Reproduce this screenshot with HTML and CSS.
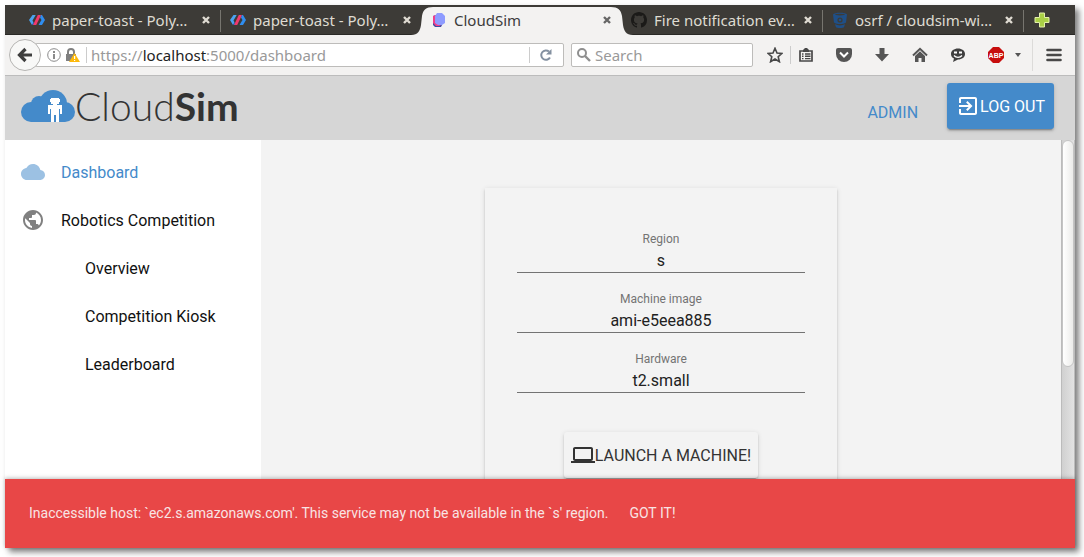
FILE: index.html
```html
<!DOCTYPE html>
<html lang="en">
<head>
<meta charset="utf-8">
<meta name="viewport" content="width=device-width, initial-scale=1">
<title>CloudSim</title>
<link rel="stylesheet" href="styles.css">
</head>
<body>
<svg class="defs" aria-hidden="true">
  <symbol id="polymer" viewBox="0 0 16 16">
    <path d="M3.500 3h3.200L3.500 8.500 4.500 10.500 3 13 0 8z" fill="#4aa3f0"/>
    <path d="M3 13l1.700-2.700L6 13z" fill="#1f5fc4"/>
    <path d="M8.800 3H12L7.200 13H4z" fill="#f2386b"/>
    <path d="M12 3h1l3 5-3 5H9.500l3-5-1.500-2.500z" fill="#2f8def"/>
  </symbol>
  <symbol id="close" viewBox="0 0 10 10">
    <path d="M2 2l6 6M8 2L2 8" stroke="currentColor" stroke-width="2.400"/>
  </symbol>
</svg>
<div class="window">
  <nav class="tabs" aria-label="Browser tabs">
    <div class="tab">
      <svg class="fav"><use href="#polymer"/></svg>
      <span class="tab-title">paper-toast - Poly…</span>
      <button class="close" aria-label="Close tab"><svg class="x"><use href="#close"/></svg></button>
    </div>
    <div class="tab plain">
      <svg class="fav"><use href="#polymer"/></svg>
      <span class="tab-title">paper-toast - Poly…</span>
      <button class="close" aria-label="Close tab"><svg class="x"><use href="#close"/></svg></button>
    </div>
    <div class="tab active">
      <svg class="curve left" viewBox="0 0 22 29"><path d="M0 29C7 29 9 25 10 19L11 10C12 4 15 1 22 1V29Z"/></svg>
      <svg class="curve right" viewBox="0 0 22 29"><path d="M22 29C15 29 13 25 12 19L11 10C10 4 7 1 0 1V29Z"/></svg>
      <svg class="fav" viewBox="0 0 16 16">
        <path d="M2 4l3-1v10h6l-1 2H4l-2-2z" fill="#3f4aa0"/>
        <path d="M2 4l3-1v8l5 3H5l-3-3z" fill="#f03e8a"/>
        <path d="M6 1h5l3 3v7l-3 2H7l-3-2V4z" fill="#8e9bff"/>
      </svg>
      <span class="tab-title">CloudSim</span>
      <button class="close" aria-label="Close tab"><svg class="x"><use href="#close"/></svg></button>
    </div>
    <div class="tab">
      <svg class="fav" viewBox="0 0 16 16"><path fill="#1b1a18" d="M8 0C3.580 0 0 3.580 0 8c0 3.540 2.290 6.530 5.470 7.590.4.070.55-.17.55-.38 0-.19-.01-.82-.01-1.490-2.010.37-2.530-.49-2.690-.94-.09-.23-.48-.94-.82-1.130-.28-.15-.68-.52-.01-.53.63-.01 1.080.58 1.230.82.72 1.210 1.870.87 2.330.66.07-.52.28-.87.51-1.070-1.780-.2-3.640-.89-3.640-3.950 0-.87.31-1.590.82-2.150-.08-.2-.36-1.020.08-2.120 0 0 .67-.21 2.200.82.64-.18 1.320-.27 2-.27s1.360.09 2 .27c1.530-1.040 2.200-.82 2.200-.82.44 1.100.16 1.920.08 2.120.51.56.82 1.270.82 2.150 0 3.070-1.870 3.750-3.650 3.950.29.25.54.73.54 1.480 0 1.070-.01 1.930-.01 2.200 0 .21.15.46.55.38A8.010 8.010 0 0 0 16 8c0-4.420-3.580-8-8-8z"/></svg>
      <span class="tab-title">Fire notification ev…</span>
      <button class="close" aria-label="Close tab"><svg class="x"><use href="#close"/></svg></button>
    </div>
    <div class="tab">
      <svg class="fav" viewBox="0 0 16 16">
        <path d="M1 2.500C2 0 14 0 15 2.500L14 10.500C11 12.500 5 12.500 2 10.500Z" fill="#1f4f87"/>
        <path d="M3 12.300c3 1.500 7 1.500 10 0l-1 2.900c-2 1.200-6 1.200-8 0z" fill="#1f4f87"/>
        <ellipse cx="8" cy="2.600" rx="5" ry="0.800" fill="#3d3b37"/>
        <circle cx="8" cy="8" r="2.600" fill="#3d3b37"/><circle cx="8" cy="8" r="1.300" fill="#1f4f87"/>
      </svg>
      <span class="tab-title">osrf / cloudsim-wi…</span>
      <button class="close" aria-label="Close tab"><svg class="x"><use href="#close"/></svg></button>
    </div>
    <button class="new-tab" aria-label="New tab">
      <svg class="fav" viewBox="0 0 16 16"><path d="M5.500 1h5v4.500H15v5h-4.500V15h-5v-4.500H1v-5h4.500z" fill="#a9cf46" stroke="#e3f0a8"/></svg>
    </button>
  </nav>

  <div class="toolbar">
    <button class="back" aria-label="Back">
      <svg class="icon" viewBox="0 0 16 16"><path d="M8.500 2L2.500 8l6 6M3 8h12" fill="none" stroke="#3e3e3e" stroke-width="3.200"/></svg>
    </button>
    <div class="url">
      <svg class="icon" viewBox="0 0 16 16"><circle cx="8" cy="8" r="6.300" fill="none" stroke="#8b8b8b"/><path d="M7 4h2v2H7zM7 7h2v5H7z" fill="#8b8b8b"/></svg>
      <svg class="icon" viewBox="0 0 16 16">
        <path d="M4 7V5a3 3 0 0 1 6 0v2" fill="none" stroke="#808080" stroke-width="2"/><path d="M2 7h10v7H2z" fill="#808080"/>
        <path d="M10.500 6L16 15H5z" fill="#fdb90b"/><path d="M10 9h1.200v3H10zM10 13h1.200v1H10z" fill="#fff"/>
      </svg>
      <div class="address" role="textbox" aria-label="Address" tabindex="0">https://<b>localhost</b>:5000/dashboard</div>
      <button class="reload" aria-label="Reload">
        <svg class="icon" viewBox="0 0 16 16"><path d="M12 10.500A4.700 4.700 0 1 1 11 4.500" fill="none" stroke="#8390a0" stroke-width="2"/><path d="M13.500 2v5.500H8z" fill="#8390a0"/></svg>
      </button>
    </div>
    <label class="search">
      <svg class="icon" viewBox="0 0 16 16"><circle cx="6" cy="6" r="4" fill="none" stroke="#8f8f8f" stroke-width="2"/><path d="M9 9l5 5" stroke="#8f8f8f" stroke-width="2.400"/></svg>
      <input class="search-input" type="text" placeholder="Search" aria-label="Search">
    </label>
    <button class="tool star" aria-label="Bookmark">
      <svg class="icon" viewBox="0 0 16 16"><path d="M8 1.300l2 4.700 5 .4-3.800 3.300 1.200 5L8 12l-4.400 2.700 1.200-5L1 6.400 6 6z" fill="none" stroke="#484848" stroke-width="1.600"/></svg>
    </button>
    <div class="tools">
      <button class="tool" aria-label="Bookmarks list"><svg class="icon" viewBox="0 0 16 16"><path d="M2 4h12v10H2z" fill="none" stroke="#484848" stroke-width="1.700"/><path d="M5 3l2-2h2l2 2v2H5z" fill="#484848"/><path d="M4 7h1.500M7 7h5.500M4 9.300h1.500M7 9.300h5.500M4 11.600h1.500M7 11.600h5.500" stroke="#484848" stroke-width="1.400"/></svg></button>
      <button class="tool" aria-label="Pocket"><svg class="icon" viewBox="0 0 16 16"><path d="M2 1h12q2 0 2 2v4a8 8 0 0 1-16 0V3q0-2 2-2z" fill="#555"/><path d="M4 5.500l4 4 4-4" fill="none" stroke="#fff" stroke-width="2"/></svg></button>
      <button class="tool" aria-label="Downloads"><svg class="icon" viewBox="0 0 16 16"><path d="M5.500 1h5v6H15l-7 7.500L1 7h4.500z" fill="#555"/></svg></button>
      <button class="tool" aria-label="Home"><svg class="icon" viewBox="0 0 16 16"><path d="M1 8.500l7-6.700 7 6.700" fill="none" stroke="#555" stroke-width="2"/><path d="M3 9l5-4.700L13 9v6H9.500v-4h-3v4H3z" fill="#555"/></svg></button>
      <button class="tool" aria-label="Chat"><svg class="icon" viewBox="0 0 16 16"><path d="M8 1.500c4 0 7 2.300 7 5.500s-3 5.500-7 5.500L3 15l1-3.400C2 10.600 1 9 1 7c0-3.200 3-5.500 7-5.500z" fill="#3f3f3f"/><path d="M4 5.500h3M9 5.500h3" stroke="#fff" stroke-width="2"/><path d="M4 8.500c2 2.500 6 2.500 8 0" fill="none" stroke="#fff" stroke-width="1.300"/></svg></button>
      <button class="tool abp" aria-label="Adblock Plus"><svg class="icon" viewBox="0 0 16 16"><path d="M5 0h6l5 5v6l-5 5H5l-5-5V5z" fill="#c70d0d"/><text x="8" y="11" class="abp-text">ABP</text></svg><svg class="caret" viewBox="0 0 6 4"><path d="M0 0h6L3 4z" fill="#555"/></svg></button>
    </div>
    <button class="tool menu" aria-label="Menu">
      <svg class="icon" viewBox="0 0 16 16"><path d="M1.500 3h13M1.500 8h13M1.500 13h13" stroke="#484848" stroke-width="2.600" stroke-linecap="round"/></svg>
    </button>
  </div>

  <header class="app-header">
    <div class="logo">
      <svg class="logo-cloud" viewBox="0 0 54 32">
        <g fill="#448aca">
          <circle cx="10" cy="22" r="10"/><circle cx="18" cy="14" r="8"/><circle cx="32" cy="14" r="14"/><circle cx="44" cy="22" r="10"/>
          <path d="M10 16h34v16H10z"/>
        </g>
        <path fill="#fff" d="M30 8h8v1h1v3h-1v2h-2v1h5v9h-2v-5h-1v13h-3v-7h-2v7h-3V19h-1v5h-2v-9h5v-1h-2v-2h-1V9h1z"/>
      </svg>
      <span class="logo-text">Cloud<b>Sim</b></span>
    </div>
    <div class="account">
      <a class="admin" href="#">ADMIN</a>
      <button class="btn primary"><svg class="mi" viewBox="0 0 24 24"><path d="M10.090 15.590L11.500 17l5-5-5-5-1.410 1.410L12.670 11H3v2h9.670l-2.580 2.590zM19 3H5c-1.110 0-2 .9-2 2v4h2V5h14v14H5v-4H3v4c0 1.100.89 2 2 2h14c1.100 0 2-.9 2-2V5c0-1.100-.9-2-2-2z"/></svg>LOG OUT</button>
    </div>
  </header>

  <div class="content">
    <nav class="sidebar" aria-label="Main">
      <a class="item current" href="#"><svg class="mi" viewBox="0 0 24 24"><path d="M19.350 10.040C18.670 6.590 15.640 4 12 4 9.110 4 6.600 5.640 5.350 8.040 2.340 8.360 0 10.910 0 14c0 3.310 2.690 6 6 6h13c2.760 0 5-2.240 5-5 0-2.640-2.050-4.780-4.650-4.960z"/></svg>Dashboard</a>
      <a class="item" href="#"><svg class="mi" viewBox="0 0 24 24"><path d="M12 2C6.480 2 2 6.480 2 12s4.480 10 10 10 10-4.480 10-10S17.520 2 12 2zm-1 17.930c-3.950-.49-7-3.850-7-7.930 0-.62.08-1.210.21-1.790L9 15v1c0 1.100.9 2 2 2v1.930zm6.900-2.540c-.26-.81-1-1.390-1.900-1.390h-1v-3c0-.55-.45-1-1-1H8v-2h2c.55 0 1-.45 1-1V7h2c1.100 0 2-.9 2-2v-.41c2.930 1.190 5 4.060 5 7.410 0 2.080-.8 3.970-2.100 5.390z"/></svg>Robotics Competition</a>
      <a class="item sub" href="#">Overview</a>
      <a class="item sub" href="#">Competition Kiosk</a>
      <a class="item sub" href="#">Leaderboard</a>
    </nav>
    <main class="main">
      <form class="card">
        <div class="field"><label class="label" for="region">Region</label><input class="value" id="region" type="text" value="s"></div>
        <div class="field"><label class="label" for="image">Machine image</label><input class="value" id="image" type="text" value="ami-e5eea885"></div>
        <div class="field"><label class="label" for="hardware">Hardware</label><input class="value" id="hardware" type="text" value="t2.small"></div>
        <button class="btn launch" type="button"><svg class="mi" viewBox="0 0 24 24"><path d="M20 18c1.100 0 1.990-.9 1.990-2L22 6c0-1.100-.9-2-2-2H4c-1.100 0-2 .9-2 2v10c0 1.100.9 2 2 2H0v2h24v-2h-4zM4 6h16v10H4V6z"/></svg>LAUNCH A MACHINE!</button>
      </form>
    </main>
    <div class="scrollbar"><div class="thumb"></div></div>
  </div>

  <div class="toast" role="alert">
    <span>Inaccessible host: `ec2.s.amazonaws.com'. This service may not be available in the `s' region.</span>
    <button class="dismiss">GOT IT!</button>
  </div>
</div>
</body>
</html>
```
FILE: styles.css
```css
* { box-sizing: border-box; }

body {
  margin: 0;
  padding: 5px 9px 9px 5px;
  height: 100vh;
  background: #fff;
  font-family: Roboto, "Liberation Sans", sans-serif;
  font-size: 16px;
  color: #111;
}

button {
  margin: 0;
  padding: 0;
  border: 0;
  background: none;
  font: inherit;
  color: inherit;
}

a { text-decoration: none; color: inherit; }
svg { display: block; flex: none; }
.defs { position: absolute; width: 0; height: 0; }

.window {
  height: 100%;
  display: flex;
  flex-direction: column;
  box-shadow: 4px 4px 6px rgba(0, 0, 0, 0.5);
}

/* Tab strip */
.tabs {
  display: flex;
  height: 30px;
  padding-left: 15px;
  background: #3d3b37;
  border-bottom: 1px solid #2a2926;
  color: #dfdbd2;
  font: 15px "Noto Sans", "Open Sans", sans-serif;
}

.tab {
  position: relative;
  flex: 0 1 201px;
  min-width: 0;
  display: flex;
  align-items: center;
  gap: 7px;
  padding: 0 10px 0 9px;
}

.tab::after {
  content: "";
  position: absolute;
  right: 0;
  top: 5px;
  bottom: 2px;
  width: 1px;
  background: #77756f;
}

.tab.plain::after, .tab.active::after { display: none; }

.tab.active {
  flex-basis: 200px;
  height: 30px;
  background: linear-gradient(#f3f2f1, #f3f2f1) 11px 2px / calc(100% - 22px) 28px no-repeat;
  color: #3c3c3c;
}

.tab > * { position: relative; }
.tab > .curve { position: absolute; top: 1px; width: 22px; height: 29px; fill: #f3f2f1; }
.curve.left { left: -11px; }
.curve.right { right: -11px; }

.fav { width: 16px; height: 16px; }
.tab-title { flex: 1; min-width: 0; overflow: hidden; white-space: nowrap; }
.x { width: 10px; height: 10px; }
.active .x { color: #666; }
.new-tab { padding: 0 10px; }

/* Toolbar */
.toolbar {
  display: flex;
  align-items: center;
  height: 41px;
  padding: 0 13px 0 4px;
  background: #f3f2f1;
  border-bottom: 1px solid #bcbcbc;
  font-family: "Noto Sans", "Open Sans", sans-serif;
  font-size: 15px;
}

.icon { width: 16px; height: 16px; }

.back {
  z-index: 1;
  flex: none;
  display: grid;
  place-items: center;
  width: 32px;
  height: 32px;
  border: 1px solid #b5b4b2;
  border-radius: 50%;
  background: #f8f8f7;
}

.url, .search {
  display: flex;
  align-items: center;
  height: 24px;
  border: 1px solid #bdbcba;
  border-radius: 2px;
  background: #fff;
}

.url {
  flex: 1;
  min-width: 0;
  gap: 2px;
  margin-left: -6px;
  padding-left: 10px;
}

.address {
  flex: 1;
  min-width: 0;
  margin-left: 4px;
  padding-left: 4px;
  border-left: 1px solid #ccc;
  line-height: 16px;
  white-space: nowrap;
  color: #999;
}

.address b { font-weight: 400; color: #222; }
.reload { padding: 0 9px 0 8px; border-left: 1px solid #ccc; }

.search { flex: 0 1 182px; min-width: 0; gap: 3px; margin-left: 7px; padding-left: 4px; }

.search-input {
  flex: 1;
  min-width: 0;
  padding: 0;
  border: 0;
  outline: 0;
  background: none;
  font: inherit;
}

.search-input::placeholder { color: #999; opacity: 1; }

.star { margin: 0 7px 0 14px; }

.tools {
  display: flex;
  gap: 22px;
  padding: 1px 11px 1px 7px;
  border-left: 1px solid #ccc;
}

.abp { display: flex; align-items: center; gap: 11px; }
.abp-text { font: bold 7px "Liberation Sans", sans-serif; fill: #fff; text-anchor: middle; }
.caret { width: 6px; height: 4px; }
.menu { padding: 8px 0 8px 13px; border-left: 1px solid #dcdbd9; }

/* Application header */
.app-header {
  display: flex;
  justify-content: space-between;
  height: 64px;
  padding: 0 21px 0 16px;
  background: #d6d6d6;
}

.logo { display: flex; align-items: flex-start; padding-top: 14px; }
.logo-cloud { width: 54px; height: 32px; }
.logo-text { font: 300 39px/32px Lato, sans-serif; color: #333; }
.logo-text b { font-weight: 700; }

.account { display: flex; align-items: flex-start; gap: 29px; padding-top: 7px; }
.admin { line-height: 20px; margin-top: 20px; color: #448aca; }

.btn {
  display: flex;
  align-items: center;
  padding: 11px 9px;
  border-radius: 3px;
  box-shadow: 0 2px 2px rgba(0, 0, 0, 0.14), 0 1px 5px rgba(0, 0, 0, 0.12), 0 3px 1px -2px rgba(0, 0, 0, 0.2);
}

.mi { width: 24px; height: 24px; fill: currentColor; }
.primary { background: #448aca; color: #fff; }

/* Page body */
.content { flex: 1; min-height: 0; display: flex; overflow: hidden; background: #f3f3f3; }
.sidebar { flex: 0 0 256px; padding: 8px 0; background: #fff; }

.item { display: flex; align-items: center; gap: 16px; height: 48px; padding: 0 16px; }
.item .mi { color: #808080; }
.item.current { color: #448aca; }
.item.current .mi { color: #9cc1e3; }
.item.sub { padding-left: 80px; }

.main { flex: 1; min-width: 0; padding: 48px 16px; }

.card {
  display: flex;
  flex-direction: column;
  align-items: center;
  max-width: 352px;
  margin: 0 auto;
  padding: 32px;
  box-shadow: 0 2px 2px rgba(0, 0, 0, 0.14), 0 1px 5px rgba(0, 0, 0, 0.12), 0 3px 1px -2px rgba(0, 0, 0, 0.2);
}

.field { width: 100%; padding: 9px 0 7px; text-align: center; }
.label { display: block; font-size: 12px; line-height: 20px; color: #737373; }

.value {
  display: block;
  width: 100%;
  height: 24px;
  padding: 0;
  border: 0;
  border-bottom: 1px solid #737373;
  outline: 0;
  background: none;
  font: inherit;
  text-align: center;
  color: #212121;
}

.launch { margin-top: 32px; padding: 11px 7px; background: #f3f3f3; color: #333; }

.scrollbar {
  flex: 0 0 14px;
  border: solid #bbb;
  border-width: 0 1px;
  background: linear-gradient(90deg, #d0d0d0, #e2e2e2);
}

.thumb {
  height: 67%;
  border: 1px solid #c4c4c4;
  border-radius: 7px;
  background: linear-gradient(90deg, #fff, #ececea);
}

/* Error toast */
.toast {
  z-index: 1;
  display: flex;
  align-items: center;
  gap: 21px;
  min-height: 69px;
  padding: 16px 24px 18px;
  background: #e84747;
  box-shadow: 0 -1px 4px rgba(0, 0, 0, 0.26);
  color: #f8e4e4;
  font-size: 14px;
}
```
